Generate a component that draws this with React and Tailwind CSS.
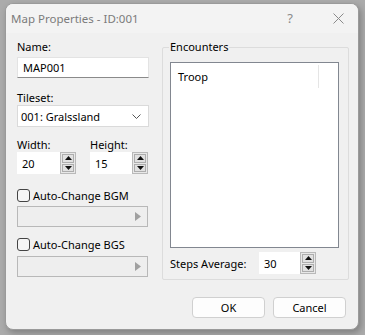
import React from "react";

const font = { fontFamily: '"Noto Sans", "Open Sans", sans-serif' };

const Spinner = () => (
  <div className="flex h-[22px] w-[16px] flex-col gap-[1px] border border-[#b9b9b9] bg-[#e8e8e8] p-[1px]">
    <div className="flex flex-1 items-center justify-center border border-[#adadad] bg-[#e1e1e1]">
      <svg width="7" height="4" viewBox="0 0 7 4"><path d="M3.5 0L7 4H0z" fill="#111" /></svg>
    </div>
    <div className="flex flex-1 items-center justify-center border border-[#adadad] bg-[#e1e1e1]">
      <svg width="7" height="4" viewBox="0 0 7 4"><path d="M0 0h7L3.5 4z" fill="#111" /></svg>
    </div>
  </div>
);

const NumberBox = ({ value, width }) => (
  <div className="flex items-center">
    <div className={`flex h-[22px] ${width} items-center bg-white pl-[5px] text-black`}>{value}</div>
    <Spinner />
  </div>
);

const Check = ({ label }) => (
  <div className="flex h-[16px] items-center gap-[3px] text-black">
    <div className="h-[13px] w-[13px] rounded-[3px] border border-[#444] bg-[#f5f5f5]" />
    <span>{label}</span>
  </div>
);

const DisabledPicker = () => (
  <div className="flex h-[21px] w-[131px] items-center justify-end border border-[#b8b8b8] bg-[#eeeeee] pr-[6px]">
    <svg width="6" height="9" viewBox="0 0 6 9"><path d="M0 0l6 4.5L0 9z" fill="#a0a0a0" /></svg>
  </div>
);

export default function App() {
  return (
    <div className="h-[335px] w-[365px] overflow-hidden bg-[#ababab] pl-[5px] pt-[3px] text-[11px] leading-[15px]" style={font}>
      <div className="flex h-[327px] w-[354px] flex-col overflow-hidden rounded-[8px] border border-[#9a9a9a] bg-[#f0f0f0] shadow-[2px_3px_6px_rgba(0,0,0,0.25)]">
        <div className="flex h-[29px] shrink-0 items-center bg-[#f3f3f3] pl-[5px] text-[11.5px] text-[#7b7b7b]">
          <span>Map Properties - ID:001</span>
          <span className="ml-auto mr-[40px] text-[13px] text-[#8a8a8a]">?</span>
          <svg className="mr-[14px]" width="11" height="11" viewBox="0 0 11 11">
            <path d="M0.5 0.5l10 10M10.5 0.5l-10 10" stroke="#8a8a8a" strokeWidth="1" />
          </svg>
        </div>
        <div className="flex flex-1 flex-col pl-[11px] pt-[6px]">
          <div className="flex gap-[13px]">
            <div className="flex w-[132px] flex-col">
              <div className="h-[15px] text-black">Name:</div>
              <div className="mt-[3px] flex h-[21px] items-center border border-[#e3e3e3] border-b-[#8a8a8a] bg-white pl-[5px] text-black">MAP001</div>
              <div className="mt-[12px] h-[15px] text-black">Tileset:</div>
              <div className="flex h-[22px] items-center justify-between border border-[#dadada] bg-white pl-[3px] pr-[7px] text-black">
                <span>001: Gralssland</span>
                <svg width="9" height="5" viewBox="0 0 9 5"><path d="M0.5 0.5l4 4 4-4" stroke="#555" fill="none" /></svg>
              </div>
              <div className="mt-[10px] flex gap-[14px]">
                <div className="flex flex-col">
                  <div className="h-[15px] text-black">Width:</div>
                  <NumberBox value="20" width="w-[43px]" />
                </div>
                <div className="flex flex-col">
                  <div className="h-[15px] text-black">Height:</div>
                  <NumberBox value="15" width="w-[42px]" />
                </div>
              </div>
              <div className="mt-[13px]"><Check label="Auto-Change BGM" /></div>
              <div className="mt-[3px]"><DisabledPicker /></div>
              <div className="mt-[9px]"><Check label="Auto-Change BGS" /></div>
              <div className="mt-[4px]"><DisabledPicker /></div>
            </div>
            <div className="relative mt-[8px] h-[233px] w-[187px] rounded-[2px] border border-[#dcdcdc] pl-[7px] pt-[14px]">
              <span className="absolute left-[6px] top-[-9px] bg-[#f0f0f0] px-[1px] text-black">Encounters</span>
              <div className="relative h-[186px] w-[169px] border border-[#828790] bg-white">
                <span className="absolute left-[7px] top-[6px] text-black">Troop</span>
                <div className="absolute left-[147px] top-[2px] h-[23px] w-[1px] bg-[#e5e5e5]" />
              </div>
              <div className="mt-[4px] flex items-center">
                <span className="w-[89px] text-black">Steps Average:</span>
                <NumberBox value="30" width="w-[41px]" />
              </div>
            </div>
          </div>
          <div className="mt-[17px] flex justify-end gap-[8px] pr-[12px]">
            <div className="flex h-[21px] w-[73px] items-center justify-center rounded-[4px] border border-[#d0d0d0] bg-[#fdfdfd] text-black">OK</div>
            <div className="flex h-[21px] w-[73px] items-center justify-center rounded-[4px] border border-[#d0d0d0] bg-[#fdfdfd] text-black">Cancel</div>
          </div>
        </div>
      </div>
    </div>
  );
}
